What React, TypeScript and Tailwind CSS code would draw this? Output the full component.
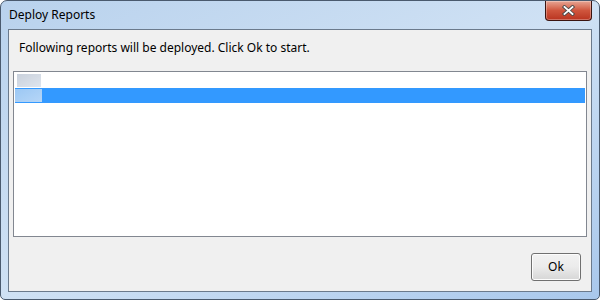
import React from 'react';

const font = { fontFamily: '"Noto Sans", "Segoe UI", sans-serif' };

const CloseButton: React.FC = () => (
  <div className="absolute right-[7px] top-0 w-[47px] h-[20px] rounded-b-[4px] border border-t-0 border-[#3a1410] bg-gradient-to-b from-[#e6a594] via-[#cf553d] to-[#b9331f] shadow-[inset_0_0_0_1px_rgba(255,255,255,0.3)] flex items-center justify-center">
    <svg width="13" height="11" viewBox="0 0 13 11">
      <path d="M2.5 2 L10.5 9 M10.5 2 L2.5 9" stroke="#4a4a4a" strokeWidth="3.6" strokeLinecap="square" />
      <path d="M2.5 2 L10.5 9 M10.5 2 L2.5 9" stroke="#ffffff" strokeWidth="1.8" strokeLinecap="square" />
    </svg>
  </div>
);

const App: React.FC = () => {
  return (
    <div className="w-[600px] h-[300px] bg-white" style={font}>
      <div className="relative w-full h-full flex flex-col rounded-t-[7px] rounded-b-[5px] border border-[#4a5a6e] bg-gradient-to-br from-[#b9d2ed] via-[#cfe1f4] to-[#a9c8ec] overflow-hidden">
        {/* Title bar */}
        <div className="h-[28px] flex items-center pl-[8px] text-[12px] text-black shrink-0">
          Deploy Reports
        </div>
        <CloseButton />

        {/* Client area */}
        <div className="flex-1 mx-[7px] mb-[7px] border border-[#6b7a8c] bg-[#f0f0f0] flex flex-col">
          <div className="h-[41px] pl-[10px] pt-[9px] text-[12px] text-black">
            Following reports will be deployed. Click Ok to start.
          </div>

          <div className="mx-[4px] h-[166px] border border-[#828790] bg-white pt-[1px] px-[1px]">
            <div className="h-[15px] flex items-center pl-[2px]">
              <div className="w-[24px] h-[13px] bg-gradient-to-br from-[#c9d1dc] to-[#dfe5ee] blur-[0.5px]" />
            </div>
            <div className="h-[15px] bg-[#3399ff] flex items-center">
              <div className="w-[27px] h-[13px] bg-gradient-to-br from-[#9cc8f4] to-[#b6d6f7] blur-[0.5px]" />
            </div>
          </div>

          <div className="flex-1 flex items-start justify-end pr-[10px] pt-[16px]">
            <button className="w-[50px] h-[28px] rounded-[3px] border border-[#707070] bg-gradient-to-b from-[#f2f2f2] via-[#ebebeb] to-[#d6d6d6] text-[12px] text-black shadow-[inset_0_0_0_1px_#fcfcfc]">
              Ok
            </button>
          </div>
        </div>
      </div>
    </div>
  );
};

export default App;
